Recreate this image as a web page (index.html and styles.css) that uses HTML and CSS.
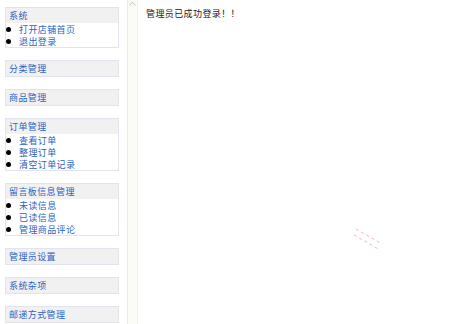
FILE: index.html
```html
<!DOCTYPE html>
<html>
<head>
    <meta charset="utf-8" />
    <title>管理后台</title>
    <link rel="stylesheet" href="styles.css">
</head>
<body>
    <div class="layout">
        <div class="menu">
            <div class="menu-box">
                <div class="menu-title">系统</div>
                <ul class="menu-list">
                    <li>打开店铺首页</li>
                    <li>退出登录</li>
                </ul>
            </div>
            <div class="menu-box">
                <div class="menu-title">分类管理</div>
            </div>
            <div class="menu-box">
                <div class="menu-title">商品管理</div>
            </div>
            <div class="menu-box">
                <div class="menu-title">订单管理</div>
                <ul class="menu-list">
                    <li>查看订单</li>
                    <li>整理订单</li>
                    <li>清空订单记录</li>
                </ul>
            </div>
            <div class="menu-box">
                <div class="menu-title">留言板信息管理</div>
                <ul class="menu-list">
                    <li>未读信息</li>
                    <li>已读信息</li>
                    <li>管理商品评论</li>
                </ul>
            </div>
            <div class="menu-box">
                <div class="menu-title">管理员设置</div>
            </div>
            <div class="menu-box">
                <div class="menu-title">系统杂项</div>
            </div>
            <div class="menu-box">
                <div class="menu-title">邮递方式管理</div>
            </div>
        </div>

        <div class="splitter">
            <svg class="splitter-arrow" width="7" height="5" viewBox="0 0 7 5">
                <polyline points="0.5,4.5 3.5,1 6.5,4.5" fill="none" stroke="#c8c8c0" stroke-width="1" />
            </svg>
        </div>

        <div class="main">
            <p class="message">管理员已成功登录！！</p>
            <svg class="marks" width="34" height="26" viewBox="0 0 34 26">
                <line x1="4" y1="2" x2="30" y2="17" stroke="#e8b8c4" stroke-width="1" stroke-dasharray="3 3" />
                <line x1="2" y1="8" x2="28" y2="23" stroke="#e8b8c4" stroke-width="1" stroke-dasharray="3 3" />
            </svg>
        </div>
    </div>
</body>
</html>
```

FILE: styles.css
```css
html, body {
    margin: 0;
    padding: 0;
    height: 100%;
    background-color: #fff;
}

body {
    font-family: "Noto Sans CJK SC", "Noto Sans", sans-serif;
    font-size: 9px;
}

.layout {
    display: flex;
    height: 100%;
}

.menu {
    width: 114px;
    padding: 7px 8px 0 5px;
    flex-shrink: 0;
}

.menu-box {
    border: 1px solid #e1e4ee;
    margin-bottom: 12px;
    background-color: #fff;
}

.menu-title {
    height: 15px;
    line-height: 15px;
    padding-left: 3px;
    background-color: #f1f1f1;
    color: #2b63c4;
    letter-spacing: 0.4px;
}

.menu-list {
    margin: 0;
    padding: 0;
    list-style: none;
}

.menu-list li {
    display: flex;
    align-items: center;
    height: 12px;
    color: #2b63c4;
    letter-spacing: 0.4px;
}

.menu-list li::before {
    content: "";
    width: 5px;
    height: 5px;
    border-radius: 50%;
    background-color: #000;
    margin-right: 8px;
}

.splitter {
    width: 9px;
    flex-shrink: 0;
    background-color: #fcfcf6;
    border-left: 1px solid #ecece4;
    border-right: 1px solid #f0f0ea;
    display: flex;
    justify-content: center;
}

.splitter-arrow {
    margin-top: 1px;
}

.main {
    flex: 1;
    position: relative;
}

.message {
    margin: 7px 0 0 8px;
    color: #222;
    letter-spacing: 0.4px;
}

.marks {
    position: absolute;
    left: 214px;
    top: 227px;
}
```
